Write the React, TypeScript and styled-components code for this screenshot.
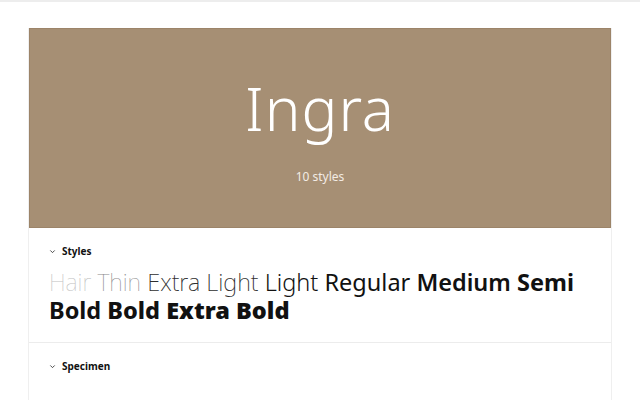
import React, { FC } from "react";
import styled, { createGlobalStyle } from "styled-components";

const GlobalStyle = createGlobalStyle`
  html, body {
    margin: 0;
    padding: 0;
    background: #ffffff;
    font-family: "Noto Sans", "Open Sans", sans-serif;
  }
`;

const Page = styled.div`
  min-height: 400px;
  box-sizing: border-box;
  border-top: 2px solid #ededed;
  padding: 26px 28px 0;
`;

const Card = styled.div`
  border: 1px solid #efefef;
  border-top: none;
  background: #ffffff;
`;

const Banner = styled.div`
  height: 200px;
  background: #a68f74;
  border: 1px solid #9c8469;
  box-sizing: border-box;
  display: flex;
  flex-direction: column;
  align-items: center;
  justify-content: center;
  color: #ffffff;
`;

const Title = styled.h1`
  margin: 0;
  margin-top: 6px;
  font-size: 60px;
  font-weight: 300;
  letter-spacing: 1px;
  line-height: 1;
`;

const Count = styled.p`
  margin: 0;
  margin-top: 30px;
  font-size: 12px;
  color: #f3ece4;
`;

const Section = styled.section<{ $last?: boolean }>`
  padding: 16px 20px ${(p) => (p.$last ? "40px" : "18px")};
  border-bottom: ${(p) => (p.$last ? "none" : "1px solid #ececec")};
`;

const SectionHead = styled.div`
  display: flex;
  align-items: center;
  gap: 6px;
  font-size: 10px;
  font-weight: 700;
  color: #111;
  height: 14px;
`;

const Chevron = styled.svg`
  width: 7px;
  height: 7px;
`;

const StyleList = styled.p`
  margin: 10px 0 0;
  font-size: 23.5px;
  line-height: 28px;
  color: #111;
`;

const StyleName = styled.span<{ $weight: number; $color: string }>`
  font-weight: ${(p) => p.$weight};
  color: ${(p) => p.$color};
`;

const styles: { name: string; weight: number; color: string }[] = [
  { name: "Hair", weight: 100, color: "#c2c2c2" },
  { name: "Thin", weight: 100, color: "#8a8a8a" },
  { name: "Extra Light", weight: 200, color: "#2e2e2e" },
  { name: "Light", weight: 300, color: "#111" },
  { name: "Regular", weight: 400, color: "#111" },
  { name: "Medium", weight: 600, color: "#111" },
  { name: "Semi Bold", weight: 700, color: "#111" },
  { name: "Bold", weight: 800, color: "#111" },
  { name: "Extra Bold", weight: 900, color: "#111" },
];

const Head: FC<{ label: string }> = ({ label }) => (
  <SectionHead>
    <Chevron viewBox="0 0 8 8">
      <path d="M1.5 2.8 L4 5.3 L6.5 2.8" fill="none" stroke="#333" strokeWidth="1" />
    </Chevron>
    {label}
  </SectionHead>
);

const App: FC = () => (
  <>
    <GlobalStyle />
    <Page>
      <Card>
        <Banner>
          <Title>Ingra</Title>
          <Count>10 styles</Count>
        </Banner>
        <Section>
          <Head label="Styles" />
          <StyleList>
            {styles.map((s, i) => (
              <React.Fragment key={s.name}>
                <StyleName $weight={s.weight} $color={s.color}>
                  {s.name}
                </StyleName>
                {i < styles.length - 1 ? " " : ""}
              </React.Fragment>
            ))}
          </StyleList>
        </Section>
        <Section $last>
          <Head label="Specimen" />
        </Section>
      </Card>
    </Page>
  </>
);

export default App;
